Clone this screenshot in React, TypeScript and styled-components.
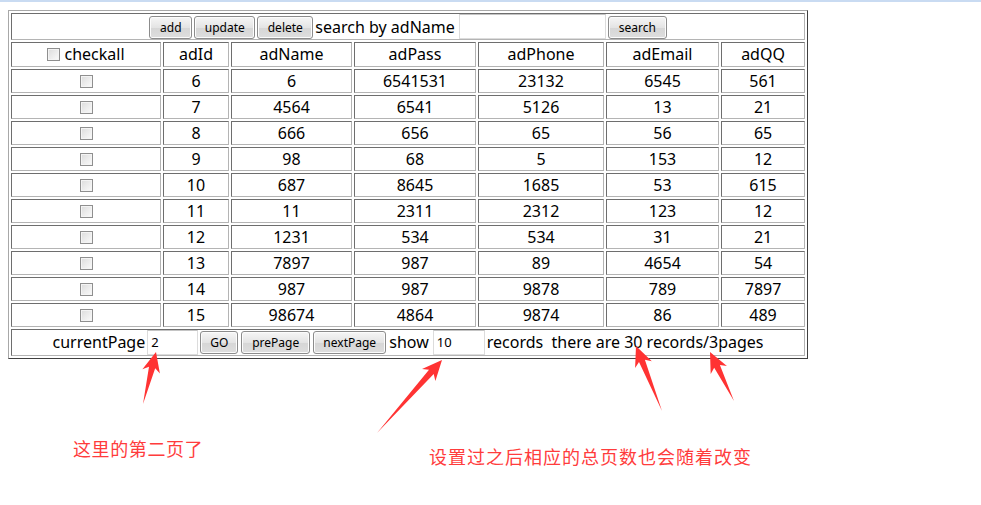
import React from "react";
import styled, { createGlobalStyle } from "styled-components";

const GlobalStyle = createGlobalStyle`
  html, body { margin: 0; padding: 0; background: #ffffff; }
  body { font-family: "Noto Sans", "Noto Sans CJK SC", sans-serif; color: #000; }
`;

const TopBar = styled.div`
  height: 2px;
  background: #c9dbf2;
`;

const Canvas = styled.div`
  position: relative;
  padding: 8px;
  height: 495px;
  box-sizing: border-box;
`;

const Table = styled.table`
  width: 800px;
  table-layout: fixed;
  border-collapse: separate;
  border-spacing: 2px;
  border-style: solid;
  border-width: 1px;
  border-color: #a8a8a8 #404040 #404040 #a8a8a8;
  font-size: 16px;
`;

const Col = styled.col<{ $w: number }>`
  width: ${(p) => p.$w}px;
`;

const Cell = styled.td`
  box-sizing: border-box;
  border-style: solid;
  border-width: 1px;
  border-color: #6e6e6e #b4b4b4 #b4b4b4 #6e6e6e;
  padding: 1px;
  height: 24px;
  line-height: 20px;
  text-align: center;
  vertical-align: middle;
  white-space: nowrap;
`;

const BarCell = styled(Cell)`
  height: 27px;
  padding: 0;
`;

const Bar = styled.div`
  display: flex;
  align-items: center;
  justify-content: center;
  gap: 2px;
  height: 25px;
`;

const Btn = styled.button<{ $w: number }>`
  box-sizing: border-box;
  width: ${(p) => p.$w}px;
  height: 23px;
  padding: 0;
  margin-top: 1px;
  font-family: "Noto Sans", sans-serif;
  font-size: 12px;
  color: #000;
  border: 1px solid #8c8c8c;
  border-radius: 3px;
  background: linear-gradient(#f6f6f6, #e4e4e4 50%, #d6d6d6 51%, #dedede);
  box-shadow: inset 0 0 0 1px #fcfcfc;
`;

const TextIn = styled.input<{ $w: number }>`
  box-sizing: border-box;
  width: ${(p) => p.$w}px;
  height: 25px;
  padding: 0 3px;
  font-family: "Noto Sans", sans-serif;
  font-size: 13px;
  color: #000;
  border: 1px solid #dcdcdc;
  border-top-color: #c4c4c4;
  outline: none;
  background: #fff;
`;

const Label = styled.span<{ $ml?: number; $mr?: number }>`
  margin-left: ${(p) => p.$ml ?? 0}px;
  margin-right: ${(p) => p.$mr ?? 0}px;
`;

const Check = styled.span`
  display: inline-block;
  box-sizing: border-box;
  width: 13px;
  height: 13px;
  border: 1px solid #8f8f8f;
  background: linear-gradient(135deg, #dcdcdc, #fbfbfb);
  box-shadow: inset 0 0 0 1px #f4f4f4;
  vertical-align: -1px;
`;

const CheckWrap = styled.span`
  display: inline-flex;
  align-items: center;
  gap: 4px;
`;

const Overlay = styled.svg`
  position: absolute;
  left: 0;
  top: 0;
  pointer-events: none;
`;

const Note = styled.div<{ $x: number; $y: number; $ls: number }>`
  position: absolute;
  left: ${(p) => p.$x}px;
  top: ${(p) => p.$y}px;
  font-family: "Noto Sans CJK SC", sans-serif;
  font-size: 18px;
  line-height: 20px;
  letter-spacing: ${(p) => p.$ls}px;
  color: #ff3c3c;
  white-space: nowrap;
`;

const widths = [150, 66, 121, 122, 126, 113, 84];
const heads = ["adId", "adName", "adPass", "adPhone", "adEmail", "adQQ"];
const rows: (string | number)[][] = [
  [6, 6, 6541531, 23132, 6545, 561],
  [7, 4564, 6541, 5126, 13, 21],
  [8, 666, 656, 65, 56, 65],
  [9, 98, 68, 5, 153, 12],
  [10, 687, 8645, 1685, 53, 615],
  [11, 11, 2311, 2312, 123, 12],
  [12, 1231, 534, 534, 31, 21],
  [13, 7897, 987, 89, 4654, 54],
  [14, 987, 987, 9878, 789, 7897],
  [15, 98674, 4864, 9874, 86, 489],
];

function arrowPoints(tx: number, ty: number, px: number, py: number) {
  const dx = px - tx;
  const dy = py - ty;
  const len = Math.hypot(dx, dy);
  const ux = dx / len;
  const uy = dy / len;
  const nx = -uy;
  const ny = ux;
  const hl = 20;
  const hw = 9;
  const sw = 3.2;
  const neckX = px - ux * (hl - 4);
  const neckY = py - uy * (hl - 4);
  const baseX = px - ux * hl;
  const baseY = py - uy * hl;
  const pts = [
    [tx, ty],
    [neckX + nx * sw, neckY + ny * sw],
    [baseX + nx * hw, baseY + ny * hw],
    [px, py],
    [baseX - nx * hw, baseY - ny * hw],
    [neckX - nx * sw, neckY - ny * sw],
  ];
  return pts.map((p) => `${p[0].toFixed(1)},${p[1].toFixed(1)}`).join(" ");
}

const arrows = [
  [143, 404, 156, 352],
  [377, 433, 442, 360],
  [662, 411, 636, 346],
  [734, 401, 710, 352],
];

export default function App() {
  return (
    <>
      <GlobalStyle />
      <TopBar />
      <Canvas>
        <Table>
          <colgroup>
            {widths.map((w, i) => (
              <Col key={i} $w={w} />
            ))}
          </colgroup>
          <tbody>
            <tr>
              <BarCell colSpan={7}>
                <Bar>
                  <Btn $w={43}>add</Btn>
                  <Btn $w={61}>update</Btn>
                  <Btn $w={56}>delete</Btn>
                  <Label $mr={2}>search by adName</Label>
                  <TextIn $w={147} />
                  <Btn $w={59}>search</Btn>
                </Bar>
              </BarCell>
            </tr>
            <tr>
              <Cell>
                <CheckWrap>
                  <Check />
                  checkall
                </CheckWrap>
              </Cell>
              {heads.map((h) => (
                <Cell key={h}>{h}</Cell>
              ))}
            </tr>
            {rows.map((r) => (
              <tr key={r[0]}>
                <Cell>
                  <Check />
                </Cell>
                {r.map((v, i) => (
                  <Cell key={i}>{v}</Cell>
                ))}
              </tr>
            ))}
            <tr>
              <BarCell colSpan={7}>
                <Bar>
                  <Label>currentPage</Label>
                  <TextIn $w={51} defaultValue="2" />
                  <Btn $w={38}>GO</Btn>
                  <Btn $w={69} style={{ marginLeft: 1 }}>prePage</Btn>
                  <Btn $w={73} style={{ marginLeft: 1 }}>nextPage</Btn>
                  <Label $ml={1} $mr={2}>show</Label>
                  <TextIn $w={52} defaultValue="10" />
                  <Label>records&nbsp;&nbsp;there are 30 records/3pages</Label>
                </Bar>
              </BarCell>
            </tr>
          </tbody>
        </Table>
        <Overlay width={981} height={503} viewBox="0 0 981 503">
          {arrows.map((a, i) => (
            <polygon key={i} points={arrowPoints(a[0], a[1] - 2, a[2], a[3] - 2)} fill="#ff3333" />
          ))}
        </Overlay>
        <Note $x={73} $y={436} $ls={0.6}>这里的第二页了</Note>
        <Note $x={429} $y={444} $ls={1}>设置过之后相应的总页数也会随着改变</Note>
      </Canvas>
    </>
  );
}
